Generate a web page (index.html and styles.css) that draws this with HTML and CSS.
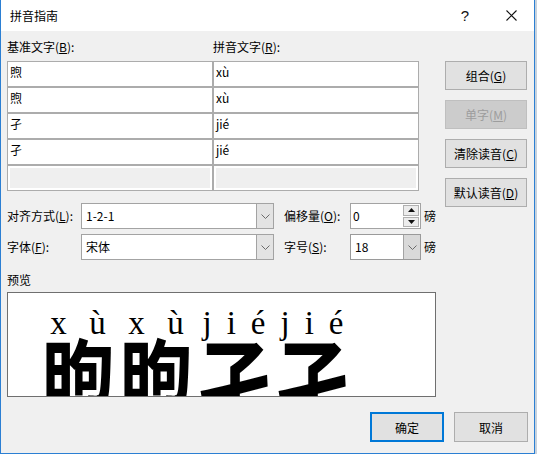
FILE: index.html
```html
<!DOCTYPE html>
<html>
<head>
<meta charset="utf-8">
<title>拼音指南</title>
<link rel="stylesheet" href="styles.css">
</head>
<body>
<div class="window">
  <div class="titlebar">
    <span class="title">拼音指南</span>
    <div class="tb-btns">
      <span class="tb-btn help">?</span>
      <span class="tb-btn close"><svg width="11" height="11" viewBox="0 0 11 11"><path d="M0.5 0.5L10.5 10.5M10.5 0.5L0.5 10.5" stroke="#111" stroke-width="1.1" fill="none"/></svg></span>
    </div>
  </div>
  <div class="content">
    <div class="top">
      <div class="main">
        <div class="heads"><span>基准文字(<u>B</u>):</span><span>拼音文字(<u>R</u>):</span></div>
        <div class="grid">
          <div class="cell">煦</div><div class="cell">xù</div>
          <div class="cell">煦</div><div class="cell">xù</div>
          <div class="cell">孑</div><div class="cell">jié</div>
          <div class="cell">孑</div><div class="cell">jié</div>
          <div class="cell empty"></div><div class="cell empty"></div>
        </div>
      </div>
      <div class="side">
        <div class="btn">组合(<u>G</u>)</div>
        <div class="btn disabled">单字(<u>M</u>)</div>
        <div class="btn">清除读音(<u>C</u>)</div>
        <div class="btn">默认读音(<u>D</u>)</div>
      </div>
    </div>
    <div class="opts">
      <div class="opt-row">
        <span class="lbl1">对齐方式(<u>L</u>):</span>
        <div class="select wide"><span class="val">1-2-1</span><span class="arrow"><svg width="9" height="5" viewBox="0 0 9 5"><path d="M0.5 0.5L4.5 4.5L8.5 0.5" stroke="#6a6a6a" fill="none" stroke-width="1"/></svg></span></div>
        <span class="lbl2">偏移量(<u>O</u>):</span>
        <div class="spin"><span class="val">0</span><span class="spin-btns"><span class="sb"><svg width="7" height="4" viewBox="0 0 7 4"><path d="M0 4L3.5 0L7 4Z" fill="#111"/></svg></span><span class="sb"><svg width="7" height="4" viewBox="0 0 7 4"><path d="M0 0L3.5 4L7 0Z" fill="#111"/></svg></span></span></div>
        <span class="unit">磅</span>
      </div>
      <div class="opt-row">
        <span class="lbl1">字体(<u>F</u>):</span>
        <div class="select wide"><span class="val">宋体</span><span class="arrow"><svg width="9" height="5" viewBox="0 0 9 5"><path d="M0.5 0.5L4.5 4.5L8.5 0.5" stroke="#6a6a6a" fill="none" stroke-width="1"/></svg></span></div>
        <span class="lbl2">字号(<u>S</u>):</span>
        <div class="select small"><span class="val">18</span><span class="arrow dark"><svg width="9" height="5" viewBox="0 0 9 5"><path d="M0.5 0.5L4.5 4.5L8.5 0.5" stroke="#6a6a6a" fill="none" stroke-width="1"/></svg></span></div>
        <span class="unit">磅</span>
      </div>
    </div>
    <div class="pv-label">预览</div>
    <div class="preview">
      <div class="col"><div class="py"><span>x</span><span>ù</span></div><div class="hz">煦</div></div>
      <div class="col"><div class="py"><span>x</span><span>ù</span></div><div class="hz">煦</div></div>
      <div class="col"><div class="py"><span>j</span><span>i</span><span>é</span></div><div class="hz">孑</div></div>
      <div class="col"><div class="py"><span>j</span><span>i</span><span>é</span></div><div class="hz">孑</div></div>
    </div>
    <div class="footer">
      <div class="fbtn ok">确定</div>
      <div class="fbtn">取消</div>
    </div>
  </div>
</div>
</body>
</html>
```
FILE: styles.css
```css
* { box-sizing: border-box; }
html, body { margin: 0; padding: 0; }
body {
  width: 537px;
  height: 454px;
  overflow: hidden;
  background: #c8d2dc;
  font-family: "Noto Sans CJK SC", "Noto Sans", sans-serif;
  font-size: 12px;
  color: #000;
}
u { text-underline-offset: 1px; }
.window {
  width: 535px;
  height: 454px;
  background: #f0f0f0;
  border-left: 1px solid #2b7fd3;
  border-right: 1px solid #2b7fd3;
  border-bottom: 1px solid #2b7fd3;
}
.titlebar {
  height: 31px;
  background: #fff;
  display: flex;
  align-items: center;
}
.title { padding-left: 9px; line-height: 16px; }
.tb-btns { margin-left: auto; display: flex; height: 31px; }
.tb-btn {
  width: 46px;
  height: 31px;
  display: flex;
  align-items: center;
  justify-content: center;
}
.help { font-family: "Liberation Sans", sans-serif; font-size: 15px; color: #111; }
.content { padding: 8px 6px 0 6px; }
.top { display: flex; gap: 26px; height: 152px; align-items: flex-start; }
.main { width: 412px; }
.heads {
  display: grid;
  grid-template-columns: 206px 206px;
  line-height: 16px;
  height: 16px;
  margin-bottom: 6px;
}
.grid {
  display: grid;
  grid-template-columns: 206px 206px;
  grid-auto-rows: 26px;
}
.cell {
  border: 1px solid #acacac;
  background: #fff;
  padding: 2px 0 0 2px;
  line-height: 16px;
}
.cell.empty { background: #efefef; box-shadow: inset 0 0 0 2px #fff; }
.side {
  width: 82px;
  padding-top: 22px;
  display: flex;
  flex-direction: column;
  gap: 10px;
}
.btn {
  height: 29px;
  border: 1px solid #adadad;
  background: #e1e1e1;
  display: flex;
  align-items: center;
  justify-content: center;
  line-height: 16px;
}
.btn.disabled { background: #cccccc; border-color: #bfbfbf; color: #9d9d9d; }
.opts {
  margin-top: 12px;
  display: flex;
  flex-direction: column;
  gap: 5px;
}
.opt-row { display: flex; align-items: center; height: 26px; }
.lbl1 { width: 74px; line-height: 16px; }
.lbl2 { width: 66px; margin-left: 10px; line-height: 16px; }
.unit { margin-left: 3px; line-height: 16px; }
.select {
  display: flex;
  height: 26px;
  border: 1px solid #a3a3a3;
  background: #fff;
}
.select.wide { width: 193px; }
.select.small { width: 71px; border-color: #9a9a9a; }
.val { flex: 1; padding-left: 4px; line-height: 24px; }
.arrow {
  width: 17px;
  background: #e3e3e3;
  border-left: 1px solid #a3a3a3;
  display: flex;
  align-items: center;
  justify-content: center;
}
.arrow.dark { background: #d9d9d9; }
.spin {
  display: flex;
  width: 71px;
  height: 26px;
  border: 1px solid #a3a3a3;
  background: #fff;
}
.spin .val { padding-left: 2px; }
.spin-btns {
  width: 17px;
  display: flex;
  flex-direction: column;
  gap: 1px;
  padding: 1px 1px 1px 0;
}
.sb {
  flex: 1;
  background: #ececec;
  border: 1px solid #b0b0b0;
  display: flex;
  align-items: center;
  justify-content: center;
}
.pv-label { margin-top: 12px; line-height: 16px; height: 16px; }
.preview {
  margin-top: 4px;
  width: 429px;
  height: 105px;
  border: 1px solid #6f6f6f;
  background: #fff;
  overflow: hidden;
  display: flex;
  padding: 13px 0 0 31px;
}
.col { width: 78px; display: flex; flex-direction: column; align-items: center; }
.py {
  width: 78px;
  display: flex;
  justify-content: space-around;
  font-family: "Liberation Serif", serif;
  font-size: 33px;
  line-height: 34px;
  height: 34px;
}
.hz {
  font-family: "Noto Sans CJK SC", sans-serif;
  font-weight: 700;
  font-size: 76px;
  line-height: 76px;
  margin-top: -10px;
  transform: scaleY(1.28);
  transform-origin: top center;
}
.footer {
  margin-top: 15px;
  display: flex;
  justify-content: flex-end;
  gap: 10px;
}
.fbtn {
  width: 74px;
  height: 30px;
  border: 1px solid #adadad;
  background: #e1e1e1;
  display: flex;
  align-items: center;
  justify-content: center;
}
.fbtn.ok { border: 2px solid #0078d7; }
```
